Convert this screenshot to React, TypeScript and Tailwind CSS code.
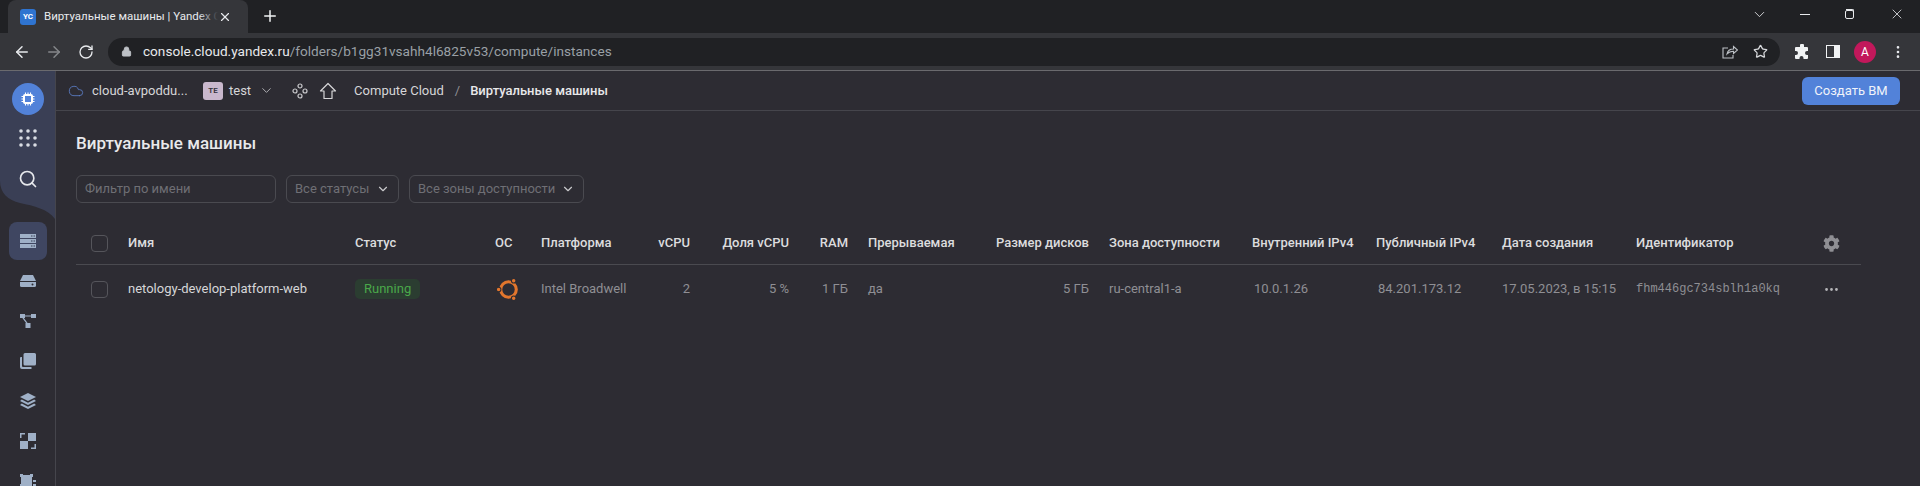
import React from 'react';
import {
  ArrowLeft,
  ArrowRight,
  ChevronDown,
  Cloud,
  Lock,
  MoreHorizontal,
  Plus,
  RotateCw,
  Search,
  Star,
  X,
} from 'lucide-react';
import { FaCog } from 'react-icons/fa';

const sideFill = '#9fb0c7';

const GridIcon = () => (
  <svg width="18" height="18" viewBox="0 0 18 18" fill="#d9dce3">
    {[2, 9, 16].map((y) =>
      [2, 9, 16].map((x) => <circle key={`${x}-${y}`} cx={x} cy={y} r="1.8" />)
    )}
  </svg>
);

const ServerIcon = () => (
  <svg width="16" height="14" viewBox="0 0 16 14" fill={sideFill}>
    <path d="M0 0h16v4H0zM0 5h16v4H0zM0 10h16v4H0z" />
    <path d="M11 1.5h1.5v1H11zM13.5 1.5H15v1h-1.5zM11 6.5h1.5v1H11zM13.5 6.5H15v1h-1.5zM11 11.5h1.5v1H11zM13.5 11.5H15v1h-1.5z" fill="#3b4159" />
  </svg>
);

const DiskIcon = () => (
  <svg width="16" height="12" viewBox="0 0 16 12" fill={sideFill}>
    <path d="M3 0h10l3 6H0z" />
    <path d="M0 7h16v3.5a1.5 1.5 0 0 1-1.5 1.5h-13A1.5 1.5 0 0 1 0 10.5z" />
    <circle cx="12.5" cy="9.5" r="1" fill="#2d2c33" />
  </svg>
);

const NetIcon = () => (
  <svg width="16" height="14" viewBox="0 0 16 14" fill={sideFill}>
    <path d="M0 0h5v4H0zM11 0h5v4h-5zM5.5 9h5v5h-5z" />
    <path d="M5 1.5h6v1H5zM3.5 3.5l4.5 6-1 .7-4.5-6z" />
  </svg>
);

const CopyIcon = () => (
  <svg width="16" height="16" viewBox="0 0 16 16" fill={sideFill}>
    <path d="M5 0h9.5A1.5 1.5 0 0 1 16 1.5V11a1.5 1.5 0 0 1-1.5 1.5H5A1.5 1.5 0 0 1 3.5 11V1.5A1.5 1.5 0 0 1 5 0z" />
    <path d="M0 5v9a2 2 0 0 0 2 2h9.5v-2H3a1 1 0 0 1-1-1V4H1a1 1 0 0 0-1 1z" />
  </svg>
);

const LayersIcon = () => (
  <svg width="16" height="16" viewBox="0 0 16 16" fill={sideFill}>
    <path d="M8 0l8 4-8 4-8-4z" />
    <path d="M1.8 6.6L8 9.7l6.2-3.1L16 8l-8 4-8-4z" />
    <path d="M1.8 10.6L8 13.7l6.2-3.1L16 12l-8 4-8-4z" />
  </svg>
);

const BlocksIcon = () => (
  <svg width="16" height="16" viewBox="0 0 16 16" fill={sideFill}>
    <path d="M8 0h8v8H8zM0 8h8v8H0z" />
    <path d="M0 0h5v1.5H1.5V5H0zM16 16h-5v-1.5h3.5V11H16z" />
  </svg>
);

const FrameIcon = () => (
  <svg width="16" height="14" viewBox="0 0 16 14" fill={sideFill}>
    <path d="M1 1h11v11H1z" />
    <path d="M0 0h3v3H0zM10 0h3v3h-3zM0 10h3v3H0zM13 6h3v2h-3zM13 10h3v4h-3z" />
  </svg>
);

const NodesIcon = () => (
  <svg width="16" height="16" viewBox="0 0 16 16" fill="none" stroke="#c9c9cc" strokeWidth="1.2">
    <circle cx="8" cy="3" r="2" />
    <circle cx="3" cy="8" r="2" />
    <circle cx="13" cy="8" r="2" />
    <circle cx="8" cy="13" r="2" />
  </svg>
);

const HomeIcon = () => (
  <svg width="18" height="18" viewBox="0 0 18 18" fill="none" stroke="#d6d6d8" strokeWidth="1.2" strokeLinejoin="round">
    <path d="M9 1.5L1.5 9H5v7.500h8V9h3.500z" />
  </svg>
);

const UbuntuIcon = () => (
  <svg width="27" height="27" viewBox="0 0 26 26" fill="none">
    <circle cx="13" cy="13" r="7.5" stroke="#e2762d" strokeWidth="3" />
    <circle cx="3.5" cy="13" r="2.2" fill="#e2762d" stroke="#2d2c33" />
    <circle cx="18" cy="4.5" r="2.2" fill="#e2762d" stroke="#2d2c33" />
    <circle cx="18" cy="21.5" r="2.2" fill="#e2762d" stroke="#2d2c33" />
  </svg>
);

const ChipIcon = () => (
  <svg width="16" height="16" viewBox="0 0 16 16" fill="none">
    <rect x="4" y="4" width="8" height="8" rx="1" stroke="#fff" strokeWidth="2" />
    <path d="M5.500 1.500V3M8 1.500V3M10.500 1.500V3M5.500 13v1.500M8 13v1.500M10.500 13v1.500M1.500 5.500H3M1.500 8H3M1.500 10.500H3M13 5.500h1.500M13 8h1.500M13 10.500h1.500" stroke="#fff" strokeWidth="1.1" />
  </svg>
);

const PuzzleIcon = () => (
  <svg width="16" height="16" viewBox="0 0 16 16" fill="#f1f3f4">
    <path d="M6 1.5a2 2 0 0 1 4 0V3h3a1 1 0 0 1 1 1v3h-1a2 2 0 0 0 0 4h1v3a1 1 0 0 1-1 1H9.5v-1a2 2 0 0 0-4 0v1H2a1 1 0 0 1-1-1v-3h1a2 2 0 0 0 0-4H1V4a1 1 0 0 1 1-1h4z" />
  </svg>
);

const ShareBoxIcon = () => (
  <svg width="16" height="15" viewBox="0 0 16 15" fill="none" stroke="#bdc1c6" strokeWidth="1.1">
    <path d="M6 4H1v10h10v-3" />
    <path d="M5 10c.6-3.3 3-5 6.5-5V2.5L15.5 6l-4 3.5V7.3C8.8 7.3 6.5 8.3 5 10z" />
  </svg>
);

const cols =
  'grid grid-cols-[52px_227px_140px_46px_100px_49px_99px_59px_100px_141px_163px_124px_126px_134px_175px_50px] items-center';

const headers = [
  { label: 'Имя', cls: '' },
  { label: 'Статус', cls: '' },
  { label: 'ОС', cls: '' },
  { label: 'Платформа', cls: '' },
  { label: 'vCPU', cls: 'text-right' },
  { label: 'Доля vCPU', cls: 'text-right' },
  { label: 'RAM', cls: 'text-right' },
  { label: 'Прерываемая', cls: 'pl-5' },
  { label: 'Размер дисков', cls: 'text-right' },
  { label: 'Зона доступности', cls: 'pl-5' },
  { label: 'Внутренний IPv4', cls: '' },
  { label: 'Публичный IPv4', cls: '' },
  { label: 'Дата создания', cls: '' },
  { label: 'Идентификатор', cls: '' },
];

const Checkbox = () => (
  <div className="ml-[15px] h-[17px] w-[17px] rounded-[4px] border border-[#55555b]" />
);

const sideItems = [DiskIcon, NetIcon, CopyIcon, LayersIcon, BlocksIcon, FrameIcon];

export default function App() {
  return (
    <div className="flex h-[486px] w-[1920px] flex-col overflow-hidden bg-[#2d2c33] font-['Roboto',sans-serif] text-[13px] text-[#d6d6d8]">
      {/* Browser tabs */}
      <div className="flex h-[33px] shrink-0 items-end bg-[#202124] pl-2 text-white">
        <div className="flex h-[33px] w-[240px] items-center rounded-t-lg bg-[#35363a] pl-3">
          <div className="flex h-4 w-4 items-center justify-center rounded-[3px] bg-[#2f74d0] text-[8px] font-bold">YC</div>
          <div className="relative ml-2 w-[174px] overflow-hidden whitespace-nowrap text-[11.5px] text-[#e8eaed]">
            Виртуальные машины | Yandex C
            <div className="absolute inset-y-0 right-0 w-5 bg-gradient-to-r from-transparent to-[#35363a]" />
          </div>
          <X size={14} className="text-[#e8eaed]" />
        </div>
        <Plus size={18} className="mb-2 ml-[13px] text-[#f1f3f4]" />
        <div className="ml-auto flex h-[33px] items-start text-[#e8eaed]">
          <div className="flex h-[28px] w-[46px] items-center justify-center"><ChevronDown size={17} strokeWidth={1.2} /></div>
          <div className="flex h-[28px] w-[46px] items-center justify-center"><div className="h-px w-[10px] bg-[#e8eaed]" /></div>
          <div className="relative flex h-[28px] w-[46px] -translate-x-[2px] items-center justify-center">
            <div className="h-[9px] w-[9px] rounded-[2px] border border-[#e8eaed]" />
            <div className="absolute left-[20px] top-[9px] h-[8px] w-[8px] rounded-tr-[2px] border-r border-t border-[#e8eaed]" />
          </div>
          <div className="flex h-[28px] w-[46px] items-center justify-center"><X size={16} strokeWidth={1.2} /></div>
        </div>
      </div>

      {/* Browser toolbar */}
      <div className="flex h-[38px] shrink-0 items-center border-b border-[#6a6a6e] bg-[#35363a]">
        <ArrowLeft size={18} className="ml-[13px] text-[#e8eaed]" />
        <ArrowRight size={18} className="ml-[14px] text-[#85878a]" />
        <RotateCw size={16} className="ml-[15px] text-[#e8eaed]" />
        <div className="ml-[14px] flex h-[28px] w-[1672px] items-center rounded-full bg-[#202124] pl-[13px] pr-[10px]">
          <Lock size={11} className="text-[#bdc1c6]" fill="#bdc1c6" />
          <span className="ml-[11px] text-[13.6px] text-[#e8eaed]">
            console.cloud.yandex.ru<span className="text-[#9aa0a6]">/folders/b1gg31vsahh4l6825v53/compute/instances</span>
          </span>
          <div className="ml-auto"><ShareBoxIcon /></div>
          <Star size={15} className="ml-[15px] mr-[2px] text-[#d8dadd]" />
        </div>
        <div className="ml-[14px]"><PuzzleIcon /></div>
        <div className="ml-4 flex h-[13px] w-[14px] justify-end border border-[#f1f3f4] bg-[#35363a]">
          <div className="h-full w-[5px] bg-[#f1f3f4]" />
        </div>
        <div className="ml-[14px] flex h-[22px] w-[22px] items-center justify-center rounded-full bg-[#c2185b] text-xs text-white">A</div>
        <MoreHorizontal size={16} className="ml-[14px] rotate-90 text-[#e8eaed]" />
      </div>

      <div className="flex min-h-0 flex-1">
        {/* Sidebar */}
        <aside className="relative flex w-[56px] shrink-0 flex-col items-center overflow-hidden border-r border-[#45454c]">
          <svg className="absolute left-0 top-0" width="55" height="148" viewBox="0 0 55 148">
            <path d="M0 0h55v148C48 138 34 135 20 132 8 129 0 122 0 110z" fill="#3a3f55" />
          </svg>
          <div className="relative flex h-[147px] shrink-0 flex-col items-center">
            <div className="mt-[12px] flex h-8 w-8 items-center justify-center rounded-full bg-[#5282d9]">
              <ChipIcon />
            </div>
            <div className="mt-[14px]"><GridIcon /></div>
            <Search size={20} className="mt-[22px] text-[#e6e8ec]" />
          </div>
          <div className="relative flex shrink-0 flex-col items-center">
            <div className="mt-[4px] flex h-[38px] w-[38px] items-center justify-center rounded-lg bg-[#3f4661]">
              <ServerIcon />
            </div>
            {sideItems.map((Icon, i) => (
              <div key={i} className="mt-[2px] flex h-[38px] w-[38px] items-center justify-center">
                <Icon />
              </div>
            ))}
          </div>
        </aside>

        <main className="min-w-0 flex-1">
          {/* App header */}
          <div className="flex h-[40px] items-center border-b border-[#45454c]">
            <Cloud size={16} className="ml-3 text-[#5a7cc4]" strokeWidth={1.3} />
            <span className="ml-2 w-[111px]">cloud-avpoddu...</span>
            <div className="flex h-[18px] w-5 items-center justify-center rounded-[3px] bg-[#c9b8cd] text-[8px] font-semibold text-[#33303a]">TE</div>
            <span className="ml-[6px]">test</span>
            <ChevronDown size={15} strokeWidth={1.3} className="ml-[8px] text-[#c9c9cc]" />
            <div className="ml-[18px]"><NodesIcon /></div>
            <div className="ml-[11px]"><HomeIcon /></div>
            <span className="ml-[17px]">Compute Cloud</span>
            <span className="ml-[11px] text-[#8f8f94]">/</span>
            <span className="ml-[10px] font-medium text-[#e8e8ea]">Виртуальные машины</span>
            <button className="ml-auto mr-5 h-[28px] w-[98px] rounded-md bg-[#5282d9] text-[#f0f3fa]">Создать ВМ</button>
          </div>

          <div className="pl-5">
            <h1 className="mt-[20px] h-[24px] text-[17px] font-medium leading-6 text-[#e9e9eb]">Виртуальные машины</h1>

            {/* Filters */}
            <div className="mt-[20px] flex h-[28px] items-stretch gap-[10px] text-[#6f6f75]">
              <div className="flex w-[200px] items-center rounded-md border border-[#4a4a50] px-2">Фильтр по имени</div>
              <div className="flex w-[113px] items-center justify-between rounded-md border border-[#4a4a50] px-2">
                <span>Все статусы</span>
                <ChevronDown size={14} className="text-[#c9c9cc]" />
              </div>
              <div className="flex w-[175px] items-center justify-between rounded-md border border-[#4a4a50] px-2">
                <span>Все зоны доступности</span>
                <ChevronDown size={14} className="text-[#c9c9cc]" />
              </div>
            </div>

            {/* Table */}
            <div className="mt-[19px] w-[1785px]">
              <div className={`${cols} h-[43px] border-b border-[#4a4a50] font-medium text-[#dcdcde]`}>
                <Checkbox />
                {headers.map((h) => (
                  <div key={h.label} className={`whitespace-nowrap ${h.cls}`}>{h.label}</div>
                ))}
                <FaCog size={17} className="ml-[12px] text-[#8f8f94]" />
              </div>
              <div className={`${cols} h-[48px] whitespace-nowrap text-[#8f8f94]`}>
                <Checkbox />
                <div className="text-[#d6d6d8]">netology-develop-platform-web</div>
                <div>
                  <span className="inline-block h-5 rounded-[5px] bg-[#2b3d31] px-[9px] leading-5 text-[#4aa84a]">Running</span>
                </div>
                <div><UbuntuIcon /></div>
                <div>Intel Broadwell</div>
                <div className="text-right">2</div>
                <div className="text-right">5 %</div>
                <div className="text-right">1 ГБ</div>
                <div className="pl-5">да</div>
                <div className="text-right">5 ГБ</div>
                <div className="pl-5">ru-central1-a</div>
                <div className="pl-[2px]">10.0.1.26</div>
                <div className="pl-[2px]">84.201.173.12</div>
                <div>17.05.2023, в 15:15</div>
                <div className="font-['Liberation_Mono',monospace] text-xs">fhm446gc734sblh1a0kq</div>
                <MoreHorizontal size={17} className="ml-[12px] text-[#b5b5b8]" />
              </div>
            </div>
          </div>
        </main>
      </div>
    </div>
  );
}
